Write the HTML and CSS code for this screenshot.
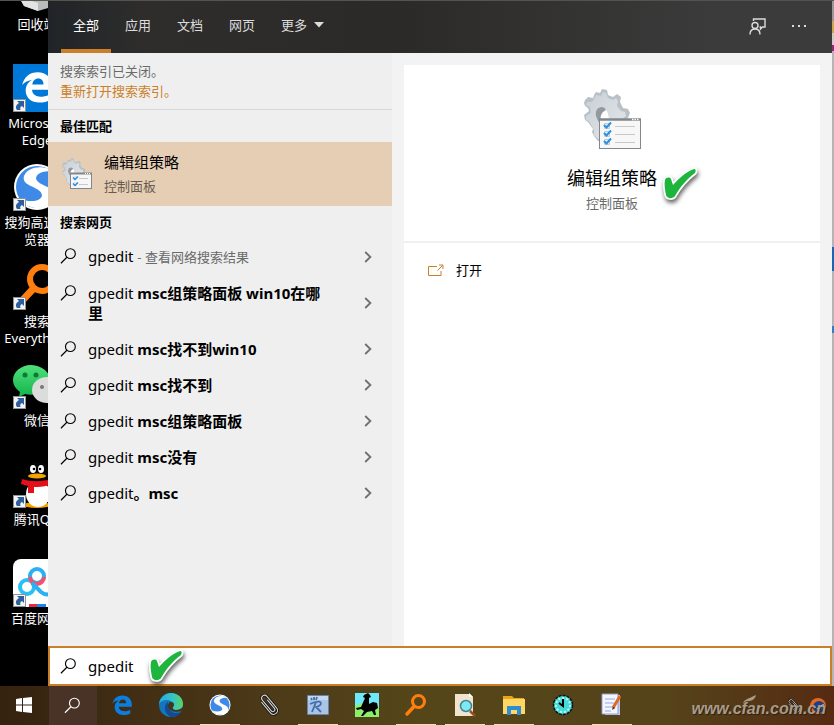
FILE: index.html
```html
<!DOCTYPE html>
<html lang="zh-CN">
<head>
    <meta charset="UTF-8">
    <meta name="viewport" content="width=device-width, initial-scale=1.0">
    <title>搜索</title>
    <link rel="stylesheet" href="styles.css">
</head>
<body>
    <!-- Shared icons -->
    <svg class="sprites" aria-hidden="true">
        <defs>
            <linearGradient id="gearFill" x1="0" y1="0" x2="1" y2="1">
                <stop offset="0" stop-color="#c9d0d6"/>
                <stop offset="1" stop-color="#e2e7ea"/>
            </linearGradient>
            <linearGradient id="edgeTop" x1="0" y1="0" x2="1" y2="0">
                <stop offset="0" stop-color="#2aa7e0"/>
                <stop offset="0.6" stop-color="#35c6c4"/>
                <stop offset="1" stop-color="#5ed35c"/>
            </linearGradient>
            <linearGradient id="chatGreen" x1="0" y1="0" x2="0" y2="1">
                <stop offset="0" stop-color="#4fe07b"/>
                <stop offset="1" stop-color="#12b44c"/>
            </linearGradient>
        </defs>
        <symbol id="search" viewBox="0 0 18 18">
            <circle cx="11" cy="6.5" r="5.2" fill="none" stroke="currentColor" stroke-width="1.2"/>
            <path d="M7.3 10.3 1 16.7" fill="none" stroke="currentColor" stroke-width="1.2"/>
        </symbol>
        <symbol id="chevron" viewBox="0 0 8 12">
            <path d="M1.2 1 6.4 6 1.2 11" fill="none" stroke="currentColor" stroke-width="1.8"/>
        </symbol>
        <symbol id="gear" viewBox="0 0 47 52">
            <path fill="#b9c1c7" d="M10 6 12 3 16 4 18 0 23 1 24 6 29 8 33 5 37 8 36 13 39 19 44 20 46 24 44 29 40 31 38 50 14 52 10 47 8 43 9 40 4 33 1 31 0 26 5 22 4 19 1 17 0 14 1 11 4 8 9 9Z"/>
            <path fill="url(#gearFill)" fill-rule="evenodd" d="M10 10 12 6 17 7 19 3 22 4 24 9 29 11 32 9 34 12 33 17 37 22 41 23 42 27 38 30 36 46 14 50 10 46 10 41 5 32 2 31 2 27 7 24 6 18 2 16 3 13 8 13ZM18 18C13 18 11 22 12 27 13 33 17 37 21 36 25 35 26 30 24 25 23 21 21 18 18 18Z"/>
            <path fill="#fff" d="M18 18C13 18 11 22 12 27 13 33 17 37 21 36 25 35 26 30 24 25 23 21 21 18 18 18Z"/>
            <path fill="#94999d" d="M18 18C13 18 11 22 12 27 13 31 15 34 17 35 16 29 16 24 22 21 21 19 20 18 18 18Z"/>
        </symbol>
        <symbol id="policy" viewBox="0 0 57 61">
            <use href="#gear" width="47" height="52"/>
            <rect x="15.500" y="30.500" width="41" height="29" fill="#f7f7f7" stroke="#82878c"/>
            <path d="M15 30.500h42" stroke="#82878c" stroke-width="2.500"/>
            <path d="M48 30.500h1.500m1 0h1.500m1 0h1.500" stroke="#fff" stroke-width="1.300"/>
            <path d="M31 37.500h20M31 45.500h20M31 53.500h20" stroke="#c9c9c9"/>
            <path d="M20.500 34.500h5v5h-5zM20.500 42.500h5v5h-5zM20.500 50.500h5v5h-5z" fill="#e6eef5" stroke="#c3cdd6"/>
            <path d="m20 36 2.500 2.500L27 33.500M20 44l2.500 2.500L27 41.500M20 52l2.500 2.500L27 49.500" fill="none" stroke="#2d8fdd" stroke-width="2"/>
        </symbol>
        <symbol id="policy-small" viewBox="0 0 31 32">
            <use href="#gear" width="24" height="27"/>
            <rect x="8.500" y="15.500" width="21" height="15" fill="#f7f7f7" stroke="#82878c"/>
            <path d="M8 15.500h22" stroke="#82878c" stroke-width="2"/>
            <path d="M23 15.500h1m1 0h1m1 0h1" stroke="#fff"/>
            <path d="M17 20.500h9M17 26.500h9" stroke="#c9c9c9"/>
            <path d="M11 18h4v4h-4zM11 24h4v4h-4z" fill="#dce9f5"/>
            <path d="m11 19.500 2 2 3-3M11 25.500l2 2 3-3" fill="none" stroke="#2d8fdd" stroke-width="1.500"/>
        </symbol>
        <symbol id="check" viewBox="0 0 38 40">
            <path d="M3 14C4 11 8 11 9 13L11 19C17 12 24 6 32 3 34 3 34 5 33 7 25 13 18 21 13 30 11 33 5 33 4 29 3 24 2 18 3 14Z" fill="#1db53c" stroke="#fff" stroke-width="3.500" stroke-linejoin="round" paint-order="stroke"/>
        </symbol>
        <symbol id="shortcut" viewBox="0 0 13 13">
            <path d="M0 0h13v13H0z" fill="#8f9499"/>
            <path d="M1 1h11v11H1z" fill="#f4f4f4"/>
            <path d="M4 2h7v7L9 7C7 8 7 9 7.500 11H4C2 8 3 6 6 4Z" fill="#2e5e9e"/>
        </symbol>
        <symbol id="edge" viewBox="0 0 24 24">
            <path fill="currentColor" d="M1.500 10.500C3 4.500 7 1.500 12.500 1.500 19 1.500 22.700 6 22.700 11.500V14H8.500C8.700 17.500 11.500 18.800 14.500 18.800 17 18.800 19.200 18.200 21 17.100V21.300C19 22.400 16.500 23 13.800 23 7.800 23 4 19.600 4 14.300 4 11 6 8.200 8.700 6.800 6 7.200 3.200 8.400 1.500 10.500ZM8.700 10.200H16.600C16.600 7.700 15.400 6 12.900 6 10.500 6 9 7.700 8.700 10.200Z"/>
        </symbol>
        <symbol id="sogou" viewBox="0 0 48 48">
            <circle cx="24" cy="24" r="23" fill="#fff"/>
            <circle cx="24" cy="24" r="21" fill="#3f8ae6"/>
            <path d="M39 8C31 2 15 3 11 13 8 24 28 23 29 32 29 38 18 40 7 36 16 49 38 48 42 35 45 23 23 23 23 15 24 9 32 8 39 8Z" fill="#fff"/>
        </symbol>
        <symbol id="lens" viewBox="0 0 48 48">
            <circle cx="29" cy="17" r="12" fill="none" stroke="#ff7e0e" stroke-width="6"/>
            <path d="M20 27 6 42" stroke="#ff7e0e" stroke-width="7" stroke-linecap="round"/>
        </symbol>
        <symbol id="clip" viewBox="0 0 24 24">
            <g transform="rotate(-40 12 12)" fill="none">
                <path d="M8 5v14a4 4 0 0 0 8 0V4a3 3 0 0 0-6 0v14a2 2 0 0 0 4 0V7" stroke="#111" stroke-width="2.600"/>
                <path d="M8 5v14a4 4 0 0 0 8 0V4a3 3 0 0 0-6 0v14a2 2 0 0 0 4 0V7" stroke="#d6d6d6" stroke-width="1.100"/>
            </g>
        </symbol>
    </svg>

    <div class="desktop">
        <aside class="shortcuts">
            <ul>
                <li>
                    <svg class="shortcut-icon" viewBox="0 0 48 48"><path d="M6 32h36l-4 10-13 4-14-5z" fill="#b9bbbd"/><path d="m6 32 19 6v8l-14-5z" fill="#e2e3e4"/></svg>
                    <span>回收站</span>
                </li>
                <li>
                    <svg class="shortcut-icon" viewBox="0 0 48 48"><path d="M0 0h48v48H0z" fill="#0078d7"/><use class="white" href="#edge" x="7" y="6" width="34" height="34"/><use href="#shortcut" y="35" width="13" height="13"/></svg>
                    <span>Microsoft Edge</span>
                </li>
                <li>
                    <svg class="shortcut-icon" viewBox="0 0 48 48"><use href="#sogou" width="48" height="48"/><use href="#shortcut" y="35" width="13" height="13"/></svg>
                    <span>搜狗高速浏<br>览器</span>
                </li>
                <li>
                    <svg class="shortcut-icon" viewBox="0 0 48 48"><use href="#lens" width="48" height="48"/><use href="#shortcut" y="35" width="13" height="13"/></svg>
                    <span>搜索 Everything</span>
                </li>
                <li>
                    <svg class="shortcut-icon" viewBox="0 0 48 48">
                        <path d="M18 4C8 4 0 11 0 19c0 5 3 9 7 12l-1 5 6-3c13 3 25-4 25-14C37 11 28 4 18 4Z" fill="url(#chatGreen)"/>
                        <circle cx="12" cy="14" r="2.500" fill="#0a7a35"/><circle cx="23" cy="14" r="2.500" fill="#0a7a35"/>
                        <ellipse cx="34" cy="29" rx="15" ry="13" fill="#dcdcdc"/><circle cx="29" cy="26" r="2" fill="#777"/>
                        <use href="#shortcut" y="35" width="13" height="13"/>
                    </svg>
                    <span>微信</span>
                </li>
                <li>
                    <svg class="shortcut-icon" viewBox="0 0 48 48">
                        <ellipse cx="24" cy="45" rx="14" ry="3" fill="#f5a400"/>
                        <ellipse cx="25" cy="34" rx="12" ry="13" fill="#fff"/>
                        <path d="M11 22C9 11 15 2 24 2s15 9 13 20z" fill="#050505"/>
                        <ellipse cx="20" cy="9" rx="3" ry="4" fill="#fff"/><ellipse cx="28" cy="9" rx="3" ry="4" fill="#fff"/>
                        <circle cx="21" cy="9" r="1.300"/><circle cx="27" cy="9" r="1.300"/>
                        <ellipse cx="24" cy="16" rx="9" ry="2.500" fill="#f5a400"/>
                        <path d="M9 19c9 3 21 3 30 0l1 5c-6 2-13 3-19 3v6h-6v-7l-7-2z" fill="#e60f19"/>
                        <use href="#shortcut" y="35" width="13" height="13"/>
                    </svg>
                    <span>腾讯QQ</span>
                </li>
                <li>
                    <svg class="shortcut-icon" viewBox="0 0 48 48">
                        <rect width="48" height="48" rx="8" fill="#fff"/>
                        <circle cx="14" cy="28" r="7" fill="none" stroke="#29c0f5" stroke-width="4"/>
                        <circle cx="24" cy="17" r="7" fill="none" stroke="#29b0f5" stroke-width="4"/>
                        <path d="M17 18a7 7 0 0 0 14 0" fill="none" stroke="#f94f6c" stroke-width="4"/>
                        <path d="M19 24 28 33Q34 38 40 33" fill="none" stroke="#29b0f5" stroke-width="4"/>
                        <path d="M16 45h8v3h-8z" fill="#e8274b"/><path d="M24 45h9v3h-9z" fill="#1a86ee"/>
                        <use href="#shortcut" y="35" width="13" height="13"/>
                    </svg>
                    <span>百度网盘</span>
                </li>
            </ul>
        </aside>

        <div class="search-panel">
            <header>
                <nav class="tabs">
                    <a href="#all" class="active">全部</a>
                    <a href="#apps">应用</a>
                    <a href="#docs">文档</a>
                    <a href="#web">网页</a>
                    <a href="#more">更多<svg class="caret" viewBox="0 0 10 6"><path d="M0 0h10L5 5.500z" fill="currentColor"/></svg></a>
                </nav>
                <button class="header-button" aria-label="反馈">
                    <svg class="feedback" viewBox="0 0 17 17" fill="none" stroke="currentColor" stroke-width="1.400">
                        <path d="M4.500 3V1h11.500v8h-2.500l-2 2V9h-1"/><circle cx="6" cy="7.500" r="3"/><path d="M1 16.500c0-3.500 2-5.500 5-5.500s5 2 5 5.500"/>
                    </svg>
                </button>
                <button class="header-button" aria-label="选项">
                    <svg class="dots" viewBox="0 0 14 2"><path d="M0 0h2v2H0zM6 0h2v2H6zM12 0h2v2h-2z" fill="currentColor"/></svg>
                </button>
            </header>

            <main class="content">
                <section class="results">
                    <div class="notice">
                        <p>搜索索引已关闭。</p>
                        <a href="#index">重新打开搜索索引。</a>
                    </div>
                    <h2>最佳匹配</h2>
                    <a href="#gpedit" class="best-match">
                        <svg class="best-icon"><use href="#policy-small"/></svg>
                        <div>
                            <div class="best-title">编辑组策略</div>
                            <div class="best-type">控制面板</div>
                        </div>
                    </a>
                    <h2>搜索网页</h2>
                    <ul class="suggestions">
                        <li><a href="#s1"><svg class="search-icon"><use href="#search"/></svg><span>gpedit <small>- 查看网络搜索结果</small></span><svg class="chevron"><use href="#chevron"/></svg></a></li>
                        <li><a href="#s2"><svg class="search-icon"><use href="#search"/></svg><span>gpedit <b>msc组策略面板 win10在哪里</b></span><svg class="chevron"><use href="#chevron"/></svg></a></li>
                        <li><a href="#s3"><svg class="search-icon"><use href="#search"/></svg><span>gpedit <b>msc找不到win10</b></span><svg class="chevron"><use href="#chevron"/></svg></a></li>
                        <li><a href="#s4"><svg class="search-icon"><use href="#search"/></svg><span>gpedit <b>msc找不到</b></span><svg class="chevron"><use href="#chevron"/></svg></a></li>
                        <li><a href="#s5"><svg class="search-icon"><use href="#search"/></svg><span>gpedit <b>msc组策略面板</b></span><svg class="chevron"><use href="#chevron"/></svg></a></li>
                        <li><a href="#s6"><svg class="search-icon"><use href="#search"/></svg><span>gpedit <b>msc没有</b></span><svg class="chevron"><use href="#chevron"/></svg></a></li>
                        <li><a href="#s7"><svg class="search-icon"><use href="#search"/></svg><span>gpedit<b>。msc</b></span><svg class="chevron"><use href="#chevron"/></svg></a></li>
                    </ul>
                </section>

                <section class="detail">
                    <div class="detail-head">
                        <svg class="detail-icon"><use href="#policy"/></svg>
                        <h1>编辑组策略<svg class="check title-check"><use href="#check"/></svg></h1>
                        <p>控制面板</p>
                    </div>
                    <a href="#open" class="open">
                        <svg class="open-icon" viewBox="0 0 16 13" fill="none" stroke="currentColor">
                            <path d="M9 2.500H.5v9h12.500V7M9.500 6.500l5-5M11 1h4v4"/>
                        </svg>
                        打开
                    </a>
                </section>
            </main>

            <form class="search-box">
                <label for="query" aria-label="搜索"><svg class="search-icon"><use href="#search"/></svg></label>
                <input type="text" id="query" value="gpedit">
                <svg class="check box-check"><use href="#check"/></svg>
            </form>
        </div>
        <div class="window-edge"></div>
    </div>

    <footer class="taskbar">
        <button aria-label="开始"><svg viewBox="0 0 24 24"><path d="m4 6 6-1v6.500H4zM11 5l9-1v7.500h-9zM4 12.500h6V19l-6-1zM11 12.500h9V20l-9-1z" fill="#fff"/></svg></button>
        <button class="searching" aria-label="搜索"><svg viewBox="0 0 24 24"><use class="white" href="#search" x="3" y="4" width="17" height="17"/></svg></button>
        <button aria-label="Edge"><svg viewBox="0 0 24 24"><use class="blue" href="#edge" x="1" y="1" width="22" height="22"/></svg></button>
        <button aria-label="新版 Edge">
            <svg viewBox="0 0 24 24">
                <circle cx="12" cy="12" r="12" fill="#1176bd"/>
                <path d="M0 11C1 4 6 0 12 0c7 0 12 5 12 11 0 4-3 6-7 6-3 0-4-1-3-3 2-4-2-7-6-7-4 0-7 2-8 4Z" fill="url(#edgeTop)"/>
                <path d="M9 9c-5 3-4 12 3 15 5 0 8-2 10-5-6 3-14 0-13-10Z" fill="#124b91"/>
                <path d="M12 9c3 0 4 3 2 5-1 2 1 3 3 3 3 0 5-1 7-3l-1 4c-6 2-14 0-14-5 0-2 1-4 3-4Z" fill="#46341a"/>
            </svg>
        </button>
        <button class="running" aria-label="搜狗浏览器"><svg viewBox="0 0 24 24"><use href="#sogou" x="1" y="1" width="22" height="22"/></svg></button>
        <button aria-label="回形针"><svg viewBox="0 0 24 24"><use href="#clip" width="24" height="24"/></svg></button>
        <button class="running" aria-label="注册表">
            <svg viewBox="0 0 24 24"><path d="M1.500 2.500h21v19h-21z" fill="#a9c4e4" stroke="#6285b2"/><path d="M2 3h20v4H2z" fill="#c4d8ee"/><path d="m6 19 4-10c5-2 8 3 0 5l5 5M4 11l5-2M5 5l1 2m2-3v3m3-3-1 3" fill="none" stroke="#406fac" stroke-width="1.800"/></svg>
        </button>
        <button aria-label="画板">
            <svg viewBox="0 0 24 24"><path d="M0 0h24v24H0z" fill="#6deafa"/><path d="M0 13 10 9l14 5v10H0z" fill="#8af06c"/><path d="m9 2 4-2 2 2 1 2-2 1v6l4-2 4 1 1 5-3 2 1 5h-2l-2-4-5 1-4 4H6l3-5-3-2-4 1-1-2 5-1 4-9-2-1Z" fill="#000"/></svg>
        </button>
        <button class="running" aria-label="Everything"><svg viewBox="0 0 24 24"><use href="#lens" width="24" height="24"/></svg></button>
        <button class="running" aria-label="文档查找">
            <svg viewBox="0 0 24 24"><path d="M2 1h15l3 3v19H2z" fill="#eee4d0"/><path d="M16 0v4h4" fill="#fff"/><path d="m17 18 5 5" stroke="#9a4e20" stroke-width="2.500"/><circle cx="13" cy="13" r="5.500" fill="#7ce9f3" stroke="#478292" stroke-width="1.500"/></svg>
        </button>
        <button class="running" aria-label="文件资源管理器">
            <svg viewBox="0 0 24 24"><path d="M1 3h9l2 2h10v16H1z" fill="#e9a51c"/><path d="M1 6h22v15H1z" fill="#ffd864"/><path d="M5 13h14v9h-4v-5H9v5H5z" fill="#318cd6"/></svg>
        </button>
        <button aria-label="时钟">
            <svg viewBox="0 0 24 24"><circle cx="12" cy="12" r="9.500" fill="#47d9d6" stroke="#061616" stroke-width="1.500" stroke-dasharray="3 1"/><circle cx="12" cy="12" r="7" fill="none" stroke="#b6ffff" stroke-width="2" stroke-dasharray="2 2"/><path d="M12 6v7L8 10" fill="none" stroke="#000" stroke-width="2"/></svg>
        </button>
        <button class="running" aria-label="记事本">
            <svg viewBox="0 0 24 24"><path d="M5 2h15v20H5z" fill="#c4caea"/><path d="M2 1h16v20H2z" fill="#f4f6ff" stroke="#949dcb"/><path d="M5 6h10M5 10h9M5 14h7M5 18h6" stroke="#98a5db"/><path d="m20 3-7 12" stroke="#dc6b21" stroke-width="3"/><path d="m13 14-1 3 3-2z" fill="#222"/></svg>
        </button>
        <div class="tray">
            <svg class="tray-icon" viewBox="0 0 16 16"><use href="#clip" width="16" height="16"/></svg>
            <svg class="tray-icon" viewBox="0 0 16 16"><circle cx="8" cy="8" r="8" fill="#e9681c"/><circle cx="9" cy="9" r="6" fill="#1d3f8f"/><path d="M4 10c4 2 5-3 10-4-1 5-5 7-10 4Z" fill="#b9d7f3"/></svg>
            <div class="watermark">www.cfan.com.cn<svg class="leaf" viewBox="0 0 14 9"><path d="M0 9C1 4 5 4 13 0 12 5 8 6 5 6 3 6 1 7 0 9Z" fill="currentColor"/></svg></div>
        </div>
    </footer>
</body>
</html>
```

FILE: styles.css
```css
* {
    box-sizing: border-box;
}
body {
    font-family: 'Noto Sans', 'Noto Sans CJK SC', sans-serif;
    font-size: 13px;
    line-height: 20px;
    margin: 0;
    min-height: 100vh;
    display: flex;
    flex-direction: column;
    background-color: #000;
    color: #000;
}
h1, h2, p, ul {
    margin: 0;
    padding: 0;
}
ul {
    list-style-type: none;
}
a {
    color: inherit;
    text-decoration: none;
}
button {
    border: none;
    padding: 0;
    background: none;
    color: inherit;
}
svg {
    display: block;
    flex-shrink: 0;
}
.sprites {
    position: absolute;
    width: 0;
    height: 0;
}
.white {
    color: #fff;
}
.blue {
    color: #0a7fe0;
}

/* Desktop */
.desktop {
    flex: 1;
    display: flex;
    border-top: 1px solid #55534c;
}
.shortcuts {
    width: 48px;
    overflow: hidden;
    color: #fff;
    line-height: 17px;
    text-align: center;
}
.shortcuts ul {
    width: 74px;
    margin-top: -36px;
}
.shortcuts li {
    height: 99px;
    display: flex;
    flex-direction: column;
    align-items: center;
    gap: 3px;
}
.shortcut-icon {
    width: 48px;
    height: 48px;
}
.window-edge {
    width: 2px;
    background: linear-gradient(#999 0 20px, #c9a94a 20px 32px, #ccc 32px 44px, #a0227c 44px 50px, #b5b5b5 50px 246px, #1668b5 246px 270px, #b5b5b5 270px 325px, #2f7cc9 325px 332px, #b5b5b5 332px);
}

/* Search window */
.search-panel {
    flex: 1;
    display: flex;
    flex-direction: column;
    background-color: #f3f3f3;
}
header {
    height: 52px;
    display: flex;
    padding: 0 12px;
    background: linear-gradient(90deg, #202428, #2e2d2c 12%, #2b2a28 45%, #3b3b3b 85%);
    color: #dcdcdc;
}
.tabs {
    flex: 1;
    display: flex;
    gap: 2px;
    padding-left: 1px;
}
.tabs a {
    display: flex;
    align-items: center;
    gap: 7px;
    padding: 0 12px;
    border-bottom: 4px solid transparent;
}
.tabs .active {
    border-bottom-color: #cc7f29;
    color: #fff;
}
.caret {
    width: 10px;
    height: 6px;
}
.header-button {
    width: 42px;
    display: flex;
    align-items: center;
    justify-content: center;
    border-bottom: 2px solid transparent;
}
.feedback {
    width: 17px;
    height: 17px;
}
.dots {
    width: 14px;
    height: 2px;
}
.content {
    flex: 1;
    display: flex;
    gap: 12px;
    padding-right: 12px;
}
.results {
    width: 344px;
    background-color: #efefef;
}
.notice {
    padding: 8px 12px;
    border-bottom: 1px solid #d8d8d8;
    color: #6a6a6a;
}
.notice a {
    color: #cc7f29;
}
h2 {
    padding: 6px 12px;
    font-size: 13px;
}
.best-match {
    display: flex;
    align-items: center;
    gap: 11px;
    padding: 8px 14px;
    background-color: #e6ceb4;
}
.best-icon {
    width: 31px;
    height: 32px;
}
.best-title {
    font-size: 15px;
    line-height: 24px;
}
.best-type {
    line-height: 24px;
    color: #665b50;
}
.suggestions a {
    display: flex;
    align-items: center;
    padding: 8px 20px 8px 12px;
    font-size: 15px;
}
.suggestions span {
    flex: 1;
    padding: 0 36px 0 11px;
}
.suggestions small {
    font-size: 13px;
    color: #6a6a6a;
}
.search-icon {
    width: 17px;
    height: 20px;
    align-self: flex-start;
}
.chevron {
    width: 8px;
    height: 12px;
    color: #6f6f6f;
}

/* Detail card */
.detail {
    flex: 1;
    margin-top: 12px;
    background-color: #fff;
}
.detail-head {
    display: flex;
    flex-direction: column;
    align-items: center;
    padding: 24px 24px 28px;
    border-bottom: 2px solid #f0f0f0;
}
.detail-icon {
    width: 57px;
    height: 61px;
}
h1 {
    position: relative;
    margin: 16px 0 3px;
    font-size: 18px;
    font-weight: normal;
    line-height: 24px;
}
.detail-head p {
    color: #6a6a6a;
}
.check {
    position: absolute;
    width: 38px;
    height: 40px;
    filter: drop-shadow(1px 3px 2px rgba(0, 0, 0, 0.6));
}
.title-check {
    top: 0;
    left: 95px;
}
.open {
    display: flex;
    align-items: center;
    gap: 12px;
    padding: 17px 24px;
}
.open-icon {
    width: 16px;
    height: 13px;
    color: #cc7f29;
}
.search-box {
    position: relative;
    display: flex;
    align-items: center;
    gap: 11px;
    padding: 0 10px;
    border: 2px solid #cc7f29;
    background-color: #fff;
}
.search-box input {
    flex: 1;
    height: 36px;
    padding: 0;
    border: none;
    outline: none;
    background: none;
    font-family: inherit;
    font-size: 15px;
}
.box-check {
    top: 0;
    left: 98px;
}

/* Taskbar */
.taskbar {
    height: 39px;
    display: flex;
    gap: 1px;
    background: linear-gradient(90deg, #35220f, #4b3818 30%, #554619 50%, #55431a 80%, #552b12);
}
.taskbar button {
    width: 48px;
    display: flex;
    align-items: center;
    justify-content: center;
    border-bottom: 1px solid transparent;
}
.taskbar button svg {
    width: 24px;
    height: 24px;
}
.taskbar .searching {
    background-color: #483326;
}
.taskbar .running {
    width: 40px;
    margin: 0 4px;
    border-bottom-color: #ffdcb0;
}
.tray {
    position: relative;
    flex: 1;
    display: flex;
    align-items: center;
    justify-content: flex-end;
    gap: 8px;
    padding-right: 8px;
}
.tray-icon {
    width: 16px;
    height: 16px;
}
.watermark {
    position: absolute;
    right: 8px;
    bottom: 7px;
    font: italic bold 16px 'Liberation Sans', sans-serif;
    color: #a79c8a;
    text-shadow: 1px 1px 1px #2d2010;
}
.leaf {
    position: absolute;
    top: -5px;
    left: 52px;
    width: 14px;
    height: 9px;
}
```
